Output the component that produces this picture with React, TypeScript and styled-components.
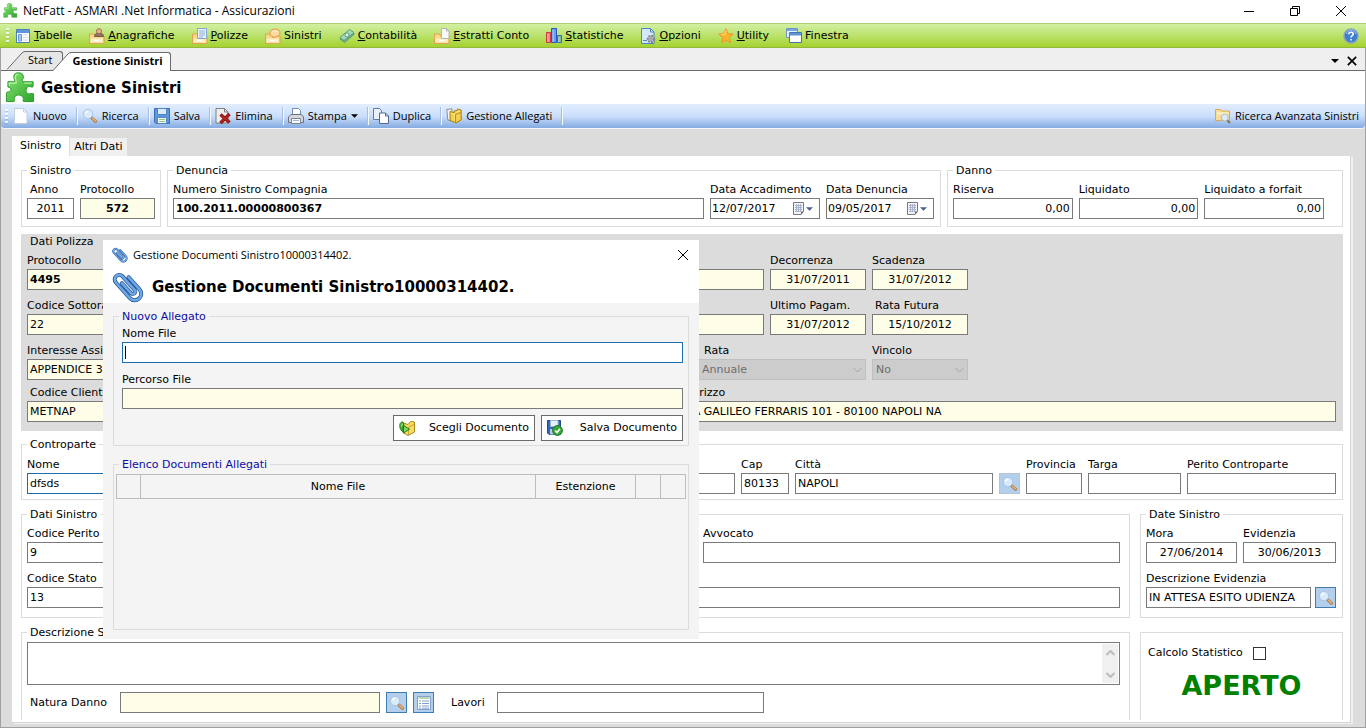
import React from "react";
import styled, { createGlobalStyle, css } from "styled-components";

const verdana = `"DejaVu Sans", Verdana, sans-serif`;
const segoe = `"Open Sans", "Segoe UI", sans-serif`;

const GlobalStyle = createGlobalStyle`
  *, *::before, *::after { box-sizing: border-box; }
  html, body, #root { height: 100%; margin: 0; }
  body { font: 11px/14px ${verdana}; color: #000; background: #dcdcdc; overflow: hidden; }
  button, input, textarea, select { font: inherit; color: inherit; margin: 0; }
  svg { display: block; flex: none; }
`;

/* ---------- icons ---------- */

const Svg = ({ size = 16, children }: { size?: number; children: React.ReactNode }) => (
  <svg width={size} height={size} viewBox="0 0 16 16" fill="none" aria-hidden="true">
    {children}
  </svg>
);

const PuzzleIcon = ({ size = 16 }: { size?: number }) => (
  <svg width={size} height={size} viewBox="0 0 32 32" fill="none" aria-hidden="true">
    <defs>
      <linearGradient id="puzzle" x1="0" y1="0" x2="1" y2="1">
        <stop offset="0" stopColor="#86e573" />
        <stop offset="1" stopColor="#2da52a" />
      </linearGradient>
    </defs>
    <path
      d="M3 10H9.500C11 9.500 9 7 9 5C9 2 11 .8 14 .8S19 2.500 19 5C19 7 17 9 18.500 10H29V15C28 16.500 26 14.500 24 15C21 16 21 21.500 24 22.500C26 23 28 21.500 29.500 22.500V30.500H19C18 29 19.500 28 18.500 26C17 23 11 23 10 26C9 28 10.500 29 9.500 30.500H1.500V21.500C2.500 19.500 5 21.500 6 19C7 16.500 5 16 3 15.500Z"
      fill="url(#puzzle)"
      stroke="#2d9a2a"
    />
    <path d="M4.500 14V11.500H11.500C12 9 10.500 7 10.600 5C10.800 3 12 2.300 14 2.300M20 11.500H27.500" stroke="#b8f5a8" strokeWidth="1.200" />
  </svg>
);

const FolderBase = () => (
  <>
    <path d="M.5 6h5l1 2h8.500v7.500H.5z" fill="#f8d88c" stroke="#e0a452" />
    <path d="M1.500 10.500h12.500v4H1.500z" fill="#fdeec0" />
    <path d="M5 12.500h5" stroke="#fff" strokeWidth="1.500" />
  </>
);

const TableWinIcon = () => (
  <Svg>
    <path d="M1.500 1.500h13v13h-13z" fill="#fff" stroke="#4a7fc0" />
    <path d="M2 2h12v3H2z" fill="#5f96da" />
    <path d="M3.500 6.500h3v6.500h-3z" fill="#a9c8f0" stroke="#6d98cf" />
    <path d="M8 7h5M8 9.500h5M8 12h5" stroke="#c9d9ee" />
  </Svg>
);
const PeopleIcon = () => (
  <Svg>
    <FolderBase />
    <path d="M5.500 8.500c0-2.500 2-3.500 4.500-3.500s4.500 1 4.500 3.500z" fill="#8f7466" stroke="#7a5c4c" />
    <circle cx="10" cy="3.200" r="2.500" fill="#e8b490" stroke="#a06c48" />
  </Svg>
);
const PolicyIcon = () => (
  <Svg>
    <FolderBase />
    <path d="M5.500.5h9v10h-9z" fill="#eef5fe" stroke="#85a5cf" />
    <path d="M7 3h6M7 5h6M7 7h6M7 9h4" stroke="#86aede" />
  </Svg>
);
const ClaimIcon = () => (
  <Svg>
    <FolderBase />
    <path d="M5 5.500C5 2.500 7 1 10 1s5 1.500 5 4-2 3.500-4 3.500L8 10V8.500C6 8 5 7.500 5 5.500z" fill="#fbd9a0" stroke="#e29a45" />
    <path d="M7 4.500c1-2 4-2 5-1" stroke="#fff6e0" />
  </Svg>
);
const MoneyIcon = () => (
  <Svg>
    <path d="M1 11 11 2.500l4.500 3.500L5.500 14.500z" fill="#6fb08a" stroke="#5a9a78" />
    <path d="M.8 9.500 10.500 1.500l4.500 3L5 12.500z" fill="#a5d6b4" stroke="#5f9e7c" />
    <circle cx="8" cy="7" r="2" fill="#e0f3e4" stroke="#5f9e7a" />
  </Svg>
);
const StatementIcon = () => (
  <Svg>
    <FolderBase />
    <path d="M7.500.5h5l2.500 2.500v7.500H7.500z" fill="#fbfbfb" stroke="#b5b5b5" />
    <path d="M12.500.5V3H15" stroke="#b5b5b5" />
  </Svg>
);
const ChartIcon = () => (
  <Svg>
    <path d="M.5 4.500h4v10h-4z" fill="#f08080" stroke="#cc3a44" />
    <path d="M5.500.5h5v14h-5z" fill="#6d9df0" stroke="#2b55b8" />
    <path d="M11.500 7.500h4v7h-4z" fill="#7fb8a8" stroke="#2f7a96" />
    <path d="M2 6v8M7.200 2v12M13 9v5" stroke="#fff" strokeOpacity=".45" />
  </Svg>
);
const OptionsIcon = () => (
  <Svg>
    <path d="M1.500.5h9l3.500 3.500v11.500H1.500z" fill="#d4e7fb" stroke="#4f86c9" />
    <path d="M10.500.5V4H14M3 12.500h4" stroke="#4f86c9" />
    <circle cx="11" cy="11" r="3.200" fill="#c3c6cc" stroke="#7d828c" strokeDasharray="2 1" strokeWidth="2" />
    <circle cx="11" cy="11" r="1.200" fill="#fff" stroke="#7d828c" />
  </Svg>
);
const StarIcon = () => (
  <Svg>
    <path d="m8 .8 2.100 4.900 5.200.4-4 3.500 1.300 5.300L8 12.100l-4.600 2.800 1.300-5.300-4-3.500 5.200-.4z" fill="#fbb52c" stroke="#f0962a" />
    <path d="M8 2.500 6.700 6.300l-3.500.4" stroke="#ffe08a" />
  </Svg>
);
const WindowsIcon = () => (
  <Svg>
    <path d="M.5.500h11v9H.5z" fill="#eaf2fc" stroke="#6e93c4" />
    <path d="M1 1h10v2H1z" fill="#7ba7e0" />
    <path d="M3.500 4.500h12v10h-12z" fill="#fff" stroke="#4a74ad" />
    <path d="M4 5h11v2.500H4z" fill="#5d93da" />
  </Svg>
);
const HelpIcon = () => (
  <Svg>
    <circle cx="8" cy="8" r="7" fill="#3f7fd2" stroke="#8ea3ba" strokeWidth="1.500" />
    <path d="M3 6a5.200 5.200 0 0 1 10 0" stroke="#8fbcf2" />
    <path d="M5.800 6.200c0-2.600 4.400-2.600 4.400 0 0 1.500-2.200 1.500-2.200 3.200M8 11v1.500" stroke="#fff" strokeWidth="1.600" />
  </Svg>
);

const PageIcon = () => (
  <Svg>
    <path d="M1.500.5h9L14 4v11.500H1.500z" fill="#fdfeff" stroke="#c3cdda" />
    <path d="M10.500.5V4H14" stroke="#c3cdda" />
  </Svg>
);
const SearchIcon = () => (
  <Svg>
    <path d="m9.800 9.800 3.800 3.500" stroke="#a8794c" strokeWidth="3" strokeLinecap="round" />
    <path d="m10.500 10.300 3 2.800" stroke="#f4b878" strokeWidth="1.400" strokeLinecap="round" />
    <circle cx="6" cy="6" r="4.700" fill="#d9eafb" stroke="#a6c5e6" />
    <path d="M3.500 5.500A2.800 2.800 0 0 1 6 3.200" stroke="#fff" strokeWidth="1.400" />
  </Svg>
);
const FloppyIcon = () => (
  <Svg>
    <path d="M.5.500h15v15H2L.5 14z" fill="#5f97dc" stroke="#3a6cb0" />
    <path d="M3.500.5h9v6h-9z" fill="#dceafa" stroke="#4f83c4" />
    <path d="M3.500 9.500h9v6h-9z" fill="#f6fbf2" stroke="#4f83c4" />
    <path d="M5 11.500h6M5 13.500h6" stroke="#93c47c" />
  </Svg>
);
const DeleteIcon = () => (
  <Svg>
    <path d="M1 .5h8.500L13 4v11H1z" fill="#eeeeee" stroke="#7f7f7f" />
    <path d="M9.500.5V4H13" stroke="#7f7f7f" />
    <path d="m5.500 6.500 9 8M14.500 6l-9 9" stroke="#7a1414" strokeWidth="3.400" />
    <path d="m6 7 8 7M14 6.500l-8 8" stroke="#b82020" strokeWidth="2" />
  </Svg>
);
const PrintIcon = () => (
  <Svg>
    <path d="M4.500 7V.5h6l2 2V7z" fill="#fff" stroke="#6f8fb8" />
    <path d="M.5 9 3 6.500h10.500L15.500 9v5.500H.5z" fill="#d4d8de" stroke="#6d737d" />
    <path d="M3.500 10.500h9v5h-9z" fill="#f7f9fc" stroke="#7c8290" />
    <path d="M5 12.500h6" stroke="#9fb6d6" />
  </Svg>
);
const CopyIcon = () => (
  <Svg>
    <path d="M.5.500h6l2 2v9h-8z" fill="#e8f1fc" stroke="#5f7ba3" />
    <path d="M6.500 5h6l3 3v7.500h-9z" fill="#fff" stroke="#4d6b96" />
    <path d="M12.500 5v3h3" stroke="#4d6b96" />
  </Svg>
);
const AttachFolderIcon = () => (
  <Svg>
    <path d="M.8 1.500 6 .8v12L1.800 12z" fill="#f6f6f6" stroke="#8c8c8c" />
    <path d="M4 3.500 8 5V3l3-.5.500-1.500 3.700 1V12L10 15l-6-2.500z" fill="#f3cf4c" stroke="#a87e14" />
    <path d="m5 5 4 1.500v7M11 4l3-.8" stroke="#fdf0a8" />
    <path d="M9.500 15V6.500l5.500-2" stroke="#b98f22" />
  </Svg>
);
const FolderSearchIcon = () => (
  <Svg>
    <path d="M.5 1.500h5l1 1.500h8v9.500H.5z" fill="#f9dd94" stroke="#d9a950" />
    <path d="M2 5.500h11" stroke="#fff3cc" strokeWidth="2" />
    <path d="m12 12 3 3" stroke="#8d7350" strokeWidth="2.200" />
    <circle cx="9.800" cy="9.500" r="3.500" fill="#dcecfb" stroke="#a7b9cf" />
  </Svg>
);
const ListIcon = () => (
  <Svg>
    <path d="M1.500 1.500h13v13h-13z" fill="#fff" stroke="#7fa3cc" />
    <path d="M2.500 3h11" stroke="#bcd6b4" strokeWidth="2" />
    <path d="M3 6h10M3 8.500h10M3 11h10M3 13.200h10" stroke="#7f9fc8" />
    <path d="M5.500 5v9" stroke="#fff" />
  </Svg>
);
const OpenFolderIcon = () => (
  <Svg>
    <path d="M4 3 9 4.500l2.500-3L15.500 2v10L9 15.500l-5-3z" fill="#f6dc62" stroke="#a88a1c" />
    <path d="M9.500 15V7l5.500-2.500" stroke="#c9a52f" />
    <path d="M4 2C2 1.500.5 3.500.8 6.500 1 9 2.500 11 4 12V6.500L5 5.500z" fill="#4fb53c" stroke="#247a1c" />
    <path d="M4.500 5.500 10.500 9.200 4.500 13z" fill="#7fd858" stroke="#247a1c" />
    <path d="M2.500 6.500C2.500 4.500 3 4 4 4" stroke="#c0f0a8" />
  </Svg>
);
const SaveOkIcon = () => (
  <Svg>
    <path d="M.5.500h13v14H2L.5 13z" fill="#3569b8" stroke="#204a8a" />
    <path d="M3.500.5h7.500v6H3.500z" fill="#e8f0fa" stroke="#9fb8dc" />
    <path d="M3 9h4v5.500H3z" fill="#b8cbe6" />
    <circle cx="10.500" cy="10.500" r="4.900" fill="#35a83a" stroke="#1b7424" />
    <path d="m8 10.500 2 2 3-3.800" stroke="#fff" strokeWidth="1.600" />
  </Svg>
);
const clipPath = "M23 9V25.500a6.500 6.500 0 0 1-13 0V4.500a4.500 4.500 0 0 1 9 0V22.500a2.500 2.500 0 0 1-5 0V9";
const ClipIcon = ({ size = 16 }: { size?: number }) => (
  <svg width={size} height={size} viewBox="0 0 32 32" fill="none" aria-hidden="true">
    <g strokeLinecap="round" transform="rotate(-42 16 16)">
      <path d={clipPath} stroke="#2c5c9c" strokeWidth="4" />
      <path d={clipPath} stroke="#6fa8e6" strokeWidth="2.400" />
    </g>
  </svg>
);
const CalendarIcon = () => (
  <svg width="11" height="13" viewBox="0 0 11 13" fill="none" aria-hidden="true">
    <path d="M.5.500h10v9L8 12.500H.5z" fill="#f4f4f8" stroke="#77777f" />
    <path d="M2 3.500h7M2 5.500h7M2 7.500h7M2 9.500h5M3.500 2v8M5.500 2v8M7.500 2v8" stroke="#a9b4cc" />
    <path d="M10.500 9.500H8v3z" fill="#666" />
  </svg>
);
const Triangle = ({ width = 7, color = "#000" }: { width?: number; color?: string }) => (
  <svg width={width} height="4" viewBox="0 0 8 4" aria-hidden="true">
    <path d="M0 0h8L4 4z" fill={color} />
  </svg>
);
const Cross = ({ size = 12, weight = 1 }: { size?: number; weight?: number }) => (
  <svg width={size} height={size} viewBox="0 0 12 12" fill="none" aria-hidden="true">
    <path d="m1 1 10 10M11 1 1 11" stroke="#000" strokeWidth={weight} />
  </svg>
);
const Chevron = ({ up = false, color = "#a5a5a5", weight = 1 }: { up?: boolean; color?: string; weight?: number }) => (
  <svg width="9" height="6" viewBox="0 0 9 6" fill="none" aria-hidden="true">
    <path d={up ? "m.5 5 4-4 4 4" : "m.5 1 4 4 4-4"} stroke={color} strokeWidth={weight} />
  </svg>
);

/* ---------- window frame ---------- */

const Window = styled.div`
  position: relative;
  display: flex;
  flex-direction: column;
  height: 100vh;
  background: #fff;
`;
const PlainButton = styled.button`
  display: flex;
  align-items: center;
  justify-content: center;
  padding: 0;
  border: 0;
  background: none;
`;
const TitleBar = styled.header`
  display: flex;
  align-items: center;
  flex: 0 0 23px;
  gap: 5px;
  padding: 0 19px 2px 3px;
  font: 12px/16px ${segoe};
`;
const WindowTitle = styled.span`
  flex: 1;
`;
const CaptionButtons = styled.div`
  display: flex;
  gap: 34px;
`;
const MenuBar = styled.nav`
  display: flex;
  align-items: center;
  flex: 0 0 25px;
  padding: 0 7px 0 6px;
  border-top: 1px solid #b3cb77;
  border-bottom: 1px solid #93b83c;
  background: linear-gradient(#d2f0a2, #bbe26c 50%, #a5d22f);
`;
const Grip = styled.span`
  flex: 0 0 3px;
  height: 15px;
  background: repeating-linear-gradient(rgba(255, 255, 255, 0.8) 0 2px, rgba(0, 0, 0, 0.12) 2px 3px, transparent 3px 4px);
`;
const MenuItems = styled.div`
  display: flex;
  flex: 1;
  gap: 17px;
  padding-left: 6px;
`;
const MenuButton = styled(PlainButton)`
  gap: 3px;
`;
const Workspace = styled.main`
  display: flex;
  flex-direction: column;
  flex: 1;
  min-height: 0;
  border: 1px solid #a0a0a0;
  border-top: 0;
  background: #dcdcdc;
`;
const DocTabs = styled.div`
  display: flex;
  align-items: flex-end;
  flex: 0 0 23px;
  padding: 0 8px 0 6px;
  border-bottom: 1px solid #6a6a6a;
  background: #efefef;
`;
const DocTabShell = styled(PlainButton)<{ $active?: boolean }>`
  align-items: stretch;
  height: 19px;
  font: 11px/16px ${segoe};
  ${(p) => p.$active && css`
    position: relative;
    z-index: 1;
    margin: 0 0 -1px -10px;
    font-weight: 700;
  `}
`;
const DocTabLabel = styled.span<{ $active?: boolean }>`
  padding: 0 ${(p) => (p.$active ? "7px 0 1px" : "10px 0 3px")};
  border: 1px solid #6a6a6a;
  border-width: 1px 1px 0 0;
  border-radius: 0 3px 0 0;
  background: ${(p) => (p.$active ? "#fff" : "#e6e6e6")};
`;
const DocTab = ({ active, children }: { active?: boolean; children: string }) => (
  <DocTabShell $active={active}>
    <svg width="18" height="19" viewBox="0 0 18 19" fill="none" aria-hidden="true">
      <path d="M0 19 14 3Q16 .5 18 .5V19z" fill={active ? "#fff" : "#e6e6e6"} />
      <path d="M0 18.500 14 3Q16 .5 18 .5" stroke="#6a6a6a" />
    </svg>
    <DocTabLabel $active={active}>{children}</DocTabLabel>
  </DocTabShell>
);
const DocTabActions = styled.div`
  display: flex;
  align-items: center;
  gap: 8px;
  height: 19px;
  margin-left: auto;
`;
const PageHeader = styled.div`
  display: flex;
  align-items: center;
  flex: 0 0 33px;
  gap: 5px;
  padding: 0 4px;
  background: #fff;
`;
const Heading = styled.h1`
  margin: 0;
  font-size: 15px;
  line-height: 20px;
  font-weight: 700;
`;
const ToolBar = styled.div`
  display: flex;
  align-items: center;
  flex: 0 0 25px;
  padding: 0 6px 0 4px;
  border-bottom: 1px solid #f2f6fc;
  border-radius: 0 0 4px 4px;
  background: linear-gradient(#e2edfe, #cbdffb 50%, #85abe2);
  font: 11px/16px ${segoe};
`;
const ToolButtons = styled.div`
  display: flex;
  margin-left: 1px;
`;
const ToolButton = styled(PlainButton)`
  gap: 4px;
  height: 18px;
  padding: 0 10px 0 4px;
  border-right: 1px solid #f4f8ff;
  box-shadow: inset -1px 0 #a9bfe0;
`;
const ToolButtonEnd = styled(PlainButton)`
  gap: 4px;
  margin-left: auto;
`;

/* ---------- form parts ---------- */

const TabStrip = styled.div`
  display: flex;
  align-items: flex-end;
  flex: 0 0 27px;
  gap: 1px;
  padding-left: 11px;
`;
const SubTab = styled(PlainButton)<{ $active?: boolean }>`
  height: ${(p) => (p.$active ? 20 : 18)}px;
  padding: 0 ${(p) => (p.$active ? 8 : 4)}px;
  background: ${(p) => (p.$active ? "#fff" : "#f0f0f0")};
`;
const Sheet = styled.div`
  display: flex;
  flex-direction: column;
  flex: 1;
  gap: 8px;
  min-height: 0;
  margin: 0 14px 4px 11px;
  padding: 8px 7px 2px 9px;
  border: 1px solid #d5d5d5;
  border-width: 0 1px 1px 0;
  background: #fff;
  box-shadow: 2px 1px 0 #f0f0f0;
  overflow: hidden;
`;
const Columns = styled.div<{ $gap?: number; $grow?: boolean }>`
  display: flex;
  gap: ${(p) => p.$gap ?? 6}px;
  min-width: 0;
  ${(p) => p.$grow && css`flex: 1; min-height: 0;`}
`;
const Group = styled.fieldset<{ $width?: number; $top?: number; $bottom?: number; $open?: boolean; $side?: number }>`
  flex: ${(p) => (p.$width ? `0 0 ${p.$width}px` : "1")};
  min-width: 0;
  margin: 0;
  padding: ${(p) => `${p.$top ?? 5}px ${p.$side ?? 5}px ${p.$bottom ?? 7}px`};
  border: 1px solid #dcdcdc;
  border-bottom-width: ${(p) => (p.$open ? 0 : 1)}px;
`;
const FixedGroup = styled(Group)`
  flex: none;
`;
const Legend = styled.legend`
  padding: 0 3px;
  line-height: 13px;
`;
const Row = styled.div<{ $template: string; $end?: number; $top?: number; $gap?: number }>`
  display: grid;
  grid-template-columns: ${(p) => p.$template};
  align-items: end;
  gap: ${(p) => p.$gap ?? 6}px;
  margin-top: ${(p) => p.$top ?? 0}px;
  padding-right: ${(p) => p.$end ?? 0}px;
`;
const FieldLabel = styled.label`
  display: flex;
  flex-direction: column;
  gap: 1px;
  min-width: 0;
  padding-top: 1px;
`;
const Caption = styled.span<{ $inset?: number }>`
  padding-left: ${(p) => p.$inset ?? 0}px;
  white-space: nowrap;
`;
const boxed = css`
  height: 21px;
  border: 1px solid #7a7a7a;
  border-radius: 0;
  background: #fff;
`;
const TextBox = styled.input<{ $locked?: boolean; $focus?: boolean; $bold?: boolean; $align?: string }>`
  ${boxed}
  width: 100%;
  min-width: 0;
  padding: 0 2px 1px;
  outline: 0;
  text-align: ${(p) => p.$align ?? "left"};
  font-weight: ${(p) => (p.$bold ? 700 : 400)};
  background: ${(p) => (p.$locked ? "#fdfde8" : "#fff")};
  border-color: ${(p) => (p.$focus ? "#1c6cae" : "#7a7a7a")};
`;
type FieldProps = {
  label: string;
  value?: string;
  inset?: number;
  locked?: boolean;
  focus?: boolean;
  bold?: boolean;
  align?: string;
};
const Field = ({ label, value = "", inset, locked, focus, bold, align }: FieldProps) => (
  <FieldLabel>
    <Caption $inset={inset}>{label}</Caption>
    <TextBox defaultValue={value} readOnly={locked} $locked={locked} $focus={focus} $bold={bold} $align={align} />
  </FieldLabel>
);

/* Steady text cursor shown while the file name is being entered. */
const CaretField = styled.div`
  position: relative;
  & input { caret-color: transparent; }
  &::after {
    content: "";
    position: absolute;
    left: 3px;
    bottom: 4px;
    width: 1px;
    height: 13px;
    background: #000;
  }
`;

const DateBox = styled.span`
  ${boxed}
  display: flex;
  align-items: center;
  gap: 2px;
  padding: 0 6px 0 0;
`;
const DateInput = styled.input`
  flex: 1;
  width: 0;
  min-width: 0;
  padding: 0 1px;
  border: 0;
  background: none;
`;
const DateField = ({ label, value }: { label: string; value: string }) => (
  <FieldLabel>
    <Caption>{label}</Caption>
    <DateBox>
      <DateInput defaultValue={value} />
      <CalendarIcon />
      <Triangle color="#44618f" />
    </DateBox>
  </FieldLabel>
);

const SelectShell = styled.span`
  position: relative;
  display: block;
  & > svg { position: absolute; top: 8px; right: 4px; }
`;
const SelectBox = styled.select`
  ${boxed}
  display: block;
  width: 100%;
  padding: 1px 16px 0 3px;
  appearance: none;
  border-color: #bfbfbf;
  background: #ccc;
  color: #6d6d6d;
  opacity: 1;
`;
const SelectField = ({ label, value, inset }: { label: string; value: string; inset?: number }) => (
  <FieldLabel>
    <Caption $inset={inset}>{label}</Caption>
    <SelectShell>
      <SelectBox disabled defaultValue={value}>
        <option>{value}</option>
      </SelectBox>
      <Chevron />
    </SelectShell>
  </FieldLabel>
);

const SquareButton = styled(PlainButton)<{ $soft?: boolean }>`
  flex: 0 0 21px;
  width: 21px;
  height: 21px;
  border: 1px solid ${(p) => (p.$soft ? "#b5c3d3" : "#3f7cb0")};
  background: #b3cfec;
`;
const PolicyPanel = styled.section`
  margin: -1px 0;
  padding: 0 7px 9px 6px;
  background: #dcdcdc;
`;
const PanelTitle = styled.h2`
  margin: 0;
  padding: 1px 3px 4px;
  font-size: 11px;
  line-height: 14px;
  font-weight: 400;
`;
const MemoBox = styled.div`
  display: flex;
  height: 43px;
  margin-right: 4px;
  padding: 1px;
  border: 1px solid #7a7a7a;
  background: #fff;
`;
const Memo = styled.textarea`
  flex: 1;
  border: 0;
  padding: 2px;
  resize: none;
  overflow: hidden;
  outline: 0;
`;
const MemoScroll = styled.div`
  display: flex;
  flex-direction: column;
  align-items: center;
  justify-content: space-between;
  width: 16px;
  padding: 6px 0 5px;
  background: #f0f0f0;
`;
const BottomRow = styled.div`
  display: flex;
  align-items: center;
  gap: 6px;
  margin-top: 7px;
  padding-left: 3px;
`;
const InlineField = styled.label<{ $caption: number; $box: number; $before?: number }>`
  display: grid;
  grid-template-columns: ${(p) => `${p.$caption}px ${p.$box}px`};
  align-items: center;
  margin-left: ${(p) => p.$before ?? 0}px;
`;
const StatusGroup = styled(Group)`
  margin-top: 6px;
`;
const CheckRow = styled.label`
  display: flex;
  align-items: center;
  gap: 10px;
  padding-left: 2px;
`;
const CheckBox = styled.input`
  appearance: none;
  width: 13px;
  height: 13px;
  border: 1px solid #333;
  background: #fff;
`;
const StatusText = styled.p`
  margin: 8px 0 0;
  font-size: 27px;
  line-height: 36px;
  font-weight: 700;
  text-align: center;
  color: #008000;
`;

/* ---------- dialog ---------- */

const Dialog = styled.section`
  position: absolute;
  z-index: 2;
  top: 240px;
  left: 103px;
  display: flex;
  flex-direction: column;
  width: 596px;
  height: 399px;
  background: #f4f4f4;
`;
const DialogBar = styled.div`
  display: flex;
  align-items: center;
  flex: 0 0 30px;
  gap: 5px;
  padding: 0 10px 0 9px;
  background: #fff;
  font: 11px/16px ${segoe};
`;
const DialogHeader = styled.div`
  display: flex;
  align-items: center;
  flex: 0 0 33px;
  gap: 8px;
  padding: 0 9px;
  background: #fff;
`;
const DialogBody = styled.div`
  display: flex;
  flex-direction: column;
  flex: 1;
  gap: 12px;
  padding: 7px 10px 9px;
`;
const DialogLegend = styled(Legend)`
  margin-left: 3px;
  color: #0c0ca6;
`;
const UploadForm = styled.form`
  display: flex;
  flex-direction: column;
  gap: 9px;
  margin: 0 3px 0 6px;
`;
const Actions = styled.div`
  display: flex;
  justify-content: flex-end;
  gap: 6px;
  margin-top: -3px;
`;
const ActionButton = styled.button`
  display: flex;
  align-items: center;
  justify-content: space-between;
  width: 142px;
  height: 26px;
  padding: 0 5px;
  border: 1px solid #6b6b6b;
  background: #fff;
`;
const FileTable = styled.table`
  width: 100%;
  border-collapse: collapse;
  table-layout: fixed;
  & th { height: 24px; padding: 0; border: 1px solid #bdbdbd; font-weight: 400; }
`;

const menus: [string, boolean, () => React.JSX.Element][] = [
  ["Tabelle", true, TableWinIcon],
  ["Anagrafiche", true, PeopleIcon],
  ["Polizze", true, PolicyIcon],
  ["Sinistri", false, ClaimIcon],
  ["Contabilità", true, MoneyIcon],
  ["Estratti Conto", true, StatementIcon],
  ["Statistiche", true, ChartIcon],
  ["Opzioni", true, OptionsIcon],
  ["Utility", true, StarIcon],
  ["Finestra", false, WindowsIcon],
];
const tools: [string, () => React.JSX.Element][] = [
  ["Nuovo", PageIcon],
  ["Ricerca", SearchIcon],
  ["Salva", FloppyIcon],
  ["Elimina", DeleteIcon],
  ["Stampa", PrintIcon],
  ["Duplica", CopyIcon],
  ["Gestione Allegati", AttachFolderIcon],
];

const AttachmentsDialog = () => (
  <Dialog role="dialog" aria-label="Gestione Documenti">
    <DialogBar>
      <ClipIcon />
      <WindowTitle>Gestione Documenti Sinistro10000314402.</WindowTitle>
      <PlainButton aria-label="Chiudi"><Cross /></PlainButton>
    </DialogBar>
    <DialogHeader>
      <ClipIcon size={32} />
      <Heading as="h2">Gestione Documenti Sinistro10000314402.</Heading>
    </DialogHeader>
    <DialogBody>
      <FixedGroup $top={3} $side={2} $bottom={4}>
        <DialogLegend>Nuovo Allegato</DialogLegend>
        <UploadForm onSubmit={(e) => e.preventDefault()}>
          <CaretField>
            <Field label="Nome File" focus />
          </CaretField>
          <Field label="Percorso File" locked />
          <Actions>
            <ActionButton type="button"><OpenFolderIcon />Scegli Documento</ActionButton>
            <ActionButton type="submit"><SaveOkIcon />Salva Documento</ActionButton>
          </Actions>
        </UploadForm>
      </FixedGroup>
      <Group $top={3} $side={2}>
        <DialogLegend>Elenco Documenti Allegati</DialogLegend>
        <FileTable>
          <colgroup>
            <col width="24" /><col /><col width="100" /><col width="25" /><col width="25" />
          </colgroup>
          <thead>
            <tr><th /><th>Nome File</th><th>Estenzione</th><th /><th /></tr>
          </thead>
        </FileTable>
      </Group>
    </DialogBody>
  </Dialog>
);

export default function App() {
  return (
    <Window>
      <GlobalStyle />
      <TitleBar>
        <PuzzleIcon size={15} />
        <WindowTitle>NetFatt - ASMARI .Net Informatica - Assicurazioni</WindowTitle>
        <CaptionButtons>
          <PlainButton aria-label="Riduci">
            <svg width="12" height="12" viewBox="0 0 12 12"><path d="M1 6.500h10" stroke="#000" /></svg>
          </PlainButton>
          <PlainButton aria-label="Ripristina">
            <svg width="12" height="12" viewBox="0 0 12 12" fill="none">
              <path d="M1.500 3.500h7v7h-7zM3.500 3.500v-2h7v7h-2" stroke="#000" />
            </svg>
          </PlainButton>
          <PlainButton aria-label="Chiudi"><Cross /></PlainButton>
        </CaptionButtons>
      </TitleBar>
      <MenuBar>
        <Grip />
        <MenuItems>
          {menus.map(([name, underlined, Icon]) => (
            <MenuButton key={name}>
              <Icon />
              <span>{underlined ? <u>{name[0]}</u> : name[0]}{name.slice(1)}</span>
            </MenuButton>
          ))}
        </MenuItems>
        <PlainButton aria-label="Guida"><HelpIcon /></PlainButton>
      </MenuBar>

      <Workspace>
        <DocTabs>
          <DocTab>Start</DocTab>
          <DocTab active>Gestione Sinistri</DocTab>
          <DocTabActions>
            <PlainButton aria-label="Elenco schede"><Triangle width={8} /></PlainButton>
            <PlainButton aria-label="Chiudi scheda"><Cross size={10} weight={2} /></PlainButton>
          </DocTabActions>
        </DocTabs>
        <PageHeader>
          <PuzzleIcon size={31} />
          <Heading>Gestione Sinistri</Heading>
        </PageHeader>
        <ToolBar>
          <Grip />
          <ToolButtons>
            {tools.map(([name, Icon]) => (
              <ToolButton key={name}>
                <Icon />
                <span>{name}</span>
                {name === "Stampa" && <Triangle />}
              </ToolButton>
            ))}
          </ToolButtons>
          <ToolButtonEnd><FolderSearchIcon />Ricerca Avanzata Sinistri</ToolButtonEnd>
        </ToolBar>
        <TabStrip>
          <SubTab $active>Sinistro</SubTab>
          <SubTab>Altri Dati</SubTab>
        </TabStrip>

        <Sheet>
          <Columns>
            <Group $width={140}>
              <Legend>Sinistro</Legend>
              <Row $template="47px 1fr">
                <Field label="Anno" value="2011" align="center" inset={3} />
                <Field label="Protocollo" value="572" align="center" bold locked />
              </Row>
            </Group>
            <Group>
              <Legend>Denuncia</Legend>
              <Row $template="1fr 110px 108px" $end={1}>
                <Field label="Numero Sinistro Compagnia" value="100.2011.00000800367" bold />
                <DateField label="Data Accadimento" value="12/07/2017" />
                <DateField label="Data Denuncia" value="09/05/2017" />
              </Row>
            </Group>
            <Group $width={396}>
              <Legend>Danno</Legend>
              <Row $template="1fr 1fr 1fr" $end={13}>
                <Field label="Riserva" value="0,00" align="right" />
                <Field label="Liquidato" value="0,00" align="right" />
                <Field label="Liquidato a forfait" value="0,00" align="right" />
              </Row>
            </Group>
          </Columns>

          <PolicyPanel>
            <PanelTitle>Dati Polizza</PanelTitle>
            <Row $template="1fr 96px 96px" $end={368}>
              <Field label="Protocollo" value="4495" bold locked />
              <Field label="Decorrenza" value="31/07/2011" align="center" locked />
              <Field label="Scadenza" value="31/07/2012" align="center" locked />
            </Row>
            <Row $template="1fr 96px 96px" $end={368} $top={8}>
              <Field label="Codice Sottoramo" value="22" locked />
              <Field label="Ultimo Pagam." value="31/07/2012" align="center" locked />
              <Field label="Rata Futura" value="15/10/2012" align="center" inset={3} locked />
            </Row>
            <Row $template="1fr 168px 96px" $end={368} $top={8}>
              <Field label="Interesse Assicurato" value="APPENDICE 3" locked />
              <SelectField label="Rata" value="Annuale" inset={6} />
              <SelectField label="Vincolo" value="No" />
            </Row>
            <Row $template="1fr 657px" $top={5}>
              <Field label="Codice Cliente" value="METNAP" inset={3} locked />
              <Field label="Indirizzo" value="VIA GALILEO FERRARIS 101 - 80100 NAPOLI NA" locked />
            </Row>
          </PolicyPanel>

          <FixedGroup $top={6} $bottom={5}>
            <Legend>Controparte</Legend>
            <Row $template="200px 1fr 48px 198px 21px 56px 93px 149px" $end={1}>
              <Field label="Nome" value="dfsds" focus />
              <TextBox aria-label="Indirizzo" />
              <Field label="Cap" value="80133" />
              <Field label="Città" value="NAPOLI" />
              <SquareButton $soft aria-label="Cerca città"><SearchIcon /></SquareButton>
              <Field label="Provincia" />
              <Field label="Targa" />
              <Field label="Perito Controparte" />
            </Row>
          </FixedGroup>

          <Columns $gap={10}>
            <Group $bottom={9}>
              <Legend>Dati Sinistro</Legend>
              <Row $template="1fr 417px" $end={4}>
                <Field label="Codice Perito" value="9" />
                <Field label="Avvocato" />
              </Row>
              <Row $template="1fr" $end={4} $top={8}>
                <Field label="Codice Stato" value="13" />
              </Row>
            </Group>
            <Group $width={203} $bottom={9}>
              <Legend>Date Sinistro</Legend>
              <Row $template="91px 1fr" $end={1}>
                <Field label="Mora" value="27/06/2014" align="center" />
                <Field label="Evidenzia" value="30/06/2013" align="center" />
              </Row>
              <Row $template="1fr 21px" $end={1} $top={8} $gap={4}>
                <Field label="Descrizione Evidenzia" value="IN ATTESA ESITO UDIENZA" />
                <SquareButton aria-label="Cerca evidenzia"><SearchIcon /></SquareButton>
              </Row>
            </Group>
          </Columns>

          <Columns $gap={10} $grow>
            <Group $open $top={3}>
              <Legend>Descrizione Sinistro</Legend>
              <MemoBox>
                <Memo aria-label="Descrizione Sinistro" />
                <MemoScroll>
                  <Chevron up weight={2} color="#bcbcbc" />
                  <Chevron weight={2} color="#bcbcbc" />
                </MemoScroll>
              </MemoBox>
              <BottomRow>
                <InlineField $caption={90} $box={260}>
                  <span>Natura Danno</span>
                  <TextBox $locked readOnly />
                </InlineField>
                <SquareButton aria-label="Cerca natura danno"><SearchIcon /></SquareButton>
                <SquareButton aria-label="Elenco natura danno"><ListIcon /></SquareButton>
                <InlineField $caption={46} $box={267} $before={11}>
                  <span>Lavori</span>
                  <TextBox />
                </InlineField>
              </BottomRow>
            </Group>
            <StatusGroup $width={203} $open $top={13}>
              <CheckRow>
                Calcolo Statistico
                <CheckBox type="checkbox" />
              </CheckRow>
              <StatusText>APERTO</StatusText>
            </StatusGroup>
          </Columns>
        </Sheet>
      </Workspace>
      <AttachmentsDialog />
    </Window>
  );
}
